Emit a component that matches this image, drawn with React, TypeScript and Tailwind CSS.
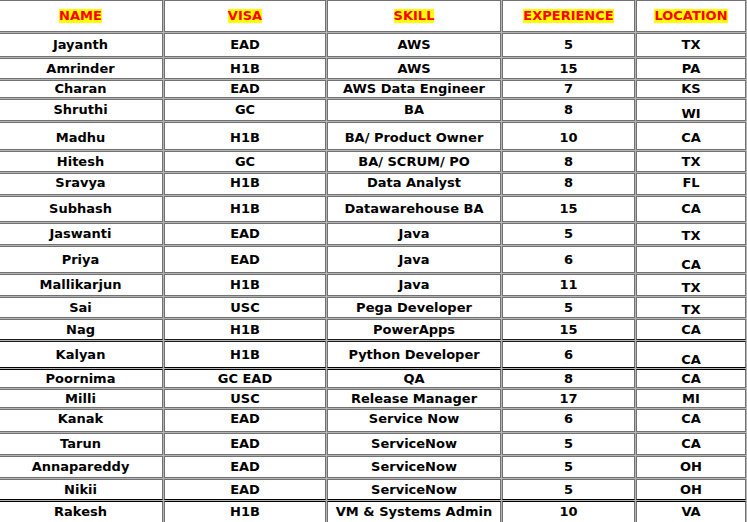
type Row = {
  name: string;
  visa: string;
  skill: string;
  exp: string;
  loc: string;
  h: string;
  pad?: string;
  locPad?: string;
  edge?: string;
};

const rows: Row[] = [
  { name: 'Jayanth', visa: 'EAD', skill: 'AWS', exp: '5', loc: 'TX', h: 'h-[24px]' },
  { name: 'Amrinder', visa: 'H1B', skill: 'AWS', exp: '15', loc: 'PA', h: 'h-[21px]' },
  { name: 'Charan', visa: 'EAD', skill: 'AWS Data Engineer', exp: '7', loc: 'KS', h: 'h-[18px]' },
  { name: 'Shruthi', visa: 'GC', skill: 'BA', exp: '8', loc: 'WI', h: 'h-[22px]', locPad: 'pt-[8px]' },
  { name: 'Madhu', visa: 'H1B', skill: 'BA/ Product Owner', exp: '10', loc: 'CA', h: 'h-[28px]', pad: 'pt-[3px]' },
  { name: 'Hitesh', visa: 'GC', skill: 'BA/ SCRUM/ PO', exp: '8', loc: 'TX', h: 'h-[21px]' },
  { name: 'Sravya', visa: 'H1B', skill: 'Data Analyst', exp: '8', loc: 'FL', h: 'h-[22px]', pad: 'pb-[2px]' },
  { name: 'Subhash', visa: 'H1B', skill: 'Datawarehouse BA', exp: '15', loc: 'CA', h: 'h-[26px]' },
  { name: 'Jaswanti', visa: 'EAD', skill: 'Java', exp: '5', loc: 'TX', h: 'h-[22px]', locPad: 'pt-[4px]' },
  { name: 'Priya', visa: 'EAD', skill: 'Java', exp: '6', loc: 'CA', h: 'h-[27px]', locPad: 'pt-[10px]' },
  { name: 'Mallikarjun', visa: 'H1B', skill: 'Java', exp: '11', loc: 'TX', h: 'h-[22px]', locPad: 'pt-[6px]' },
  { name: 'Sai', visa: 'USC', skill: 'Pega Developer', exp: '5', loc: 'TX', h: 'h-[21px]', locPad: 'pt-[4px]' },
  { name: 'Nag', visa: 'H1B', skill: 'PowerApps', exp: '15', loc: 'CA', h: 'h-[21px]', edge: 'border-b-[#1a1a1a]' },
  { name: 'Kalyan', visa: 'H1B', skill: 'Python Developer', exp: '6', loc: 'CA', h: 'h-[27px]', locPad: 'pt-[10px]', edge: 'border-t-[#1a1a1a] border-b-[#000]' },
  { name: 'Poornima', visa: 'GC EAD', skill: 'QA', exp: '8', loc: 'CA', h: 'h-[19px]', edge: 'border-t-[#000]' },
  { name: 'Milli', visa: 'USC', skill: 'Release Manager', exp: '17', loc: 'MI', h: 'h-[19px]' },
  { name: 'Kanak', visa: 'EAD', skill: 'Service Now', exp: '6', loc: 'CA', h: 'h-[23px]', pad: 'pb-[3px]' },
  { name: 'Tarun', visa: 'EAD', skill: 'ServiceNow', exp: '5', loc: 'CA', h: 'h-[22px]' },
  { name: 'Annapareddy', visa: 'EAD', skill: 'ServiceNow', exp: '5', loc: 'OH', h: 'h-[22px]' },
  { name: 'Nikii', visa: 'EAD', skill: 'ServiceNow', exp: '5', loc: 'OH', h: 'h-[21px]', edge: 'border-b-[#000]' },
  { name: 'Rakesh', visa: 'H1B', skill: 'VM & Systems Admin', exp: '10', loc: 'VA', h: 'h-[22px]', edge: 'border-t-[#000]' },
];

const widths = ['w-[165px]', 'w-[162px]', 'w-[174px]', 'w-[133px]', 'w-[110px]'];
const headers = ['NAME', 'VISA', 'SKILL', 'EXPERIENCE', 'LOCATION'];

const cell = 'flex items-center justify-center bg-white border border-[#727272] shrink-0';

export default function App() {
  return (
    <div className="w-[747px] h-[522px] overflow-hidden bg-white font-['DejaVu_Sans',Verdana,sans-serif] font-bold text-[13px] text-black">
      <div className="ml-[-3px] mt-[-1px] w-[750px] p-px bg-[#b4b4b4] flex flex-col gap-px">
        <div className="flex gap-px">
          {headers.map((h, i) => (
            <div key={h} className={`${cell} ${widths[i]} h-[32px]`}>
              <span className="inline-block h-[14px] leading-[14px] bg-[#ffff00] text-[#ff0000]">{h}</span>
            </div>
          ))}
        </div>
        {rows.map((r) => {
          const base = `${cell} ${r.h} ${r.edge ?? ''}`;
          return (
            <div key={r.name} className="flex gap-px">
              <div className={`${base} ${widths[0]} ${r.pad ?? ''}`}>{r.name}</div>
              <div className={`${base} ${widths[1]} ${r.pad ?? ''}`}>{r.visa}</div>
              <div className={`${base} ${widths[2]} ${r.pad ?? ''}`}>{r.skill}</div>
              <div className={`${base} ${widths[3]} ${r.pad ?? ''}`}>{r.exp}</div>
              <div className={`${base} ${widths[4]} ${r.locPad ?? r.pad ?? ''}`}>{r.loc}</div>
            </div>
          );
        })}
      </div>
    </div>
  );
}
